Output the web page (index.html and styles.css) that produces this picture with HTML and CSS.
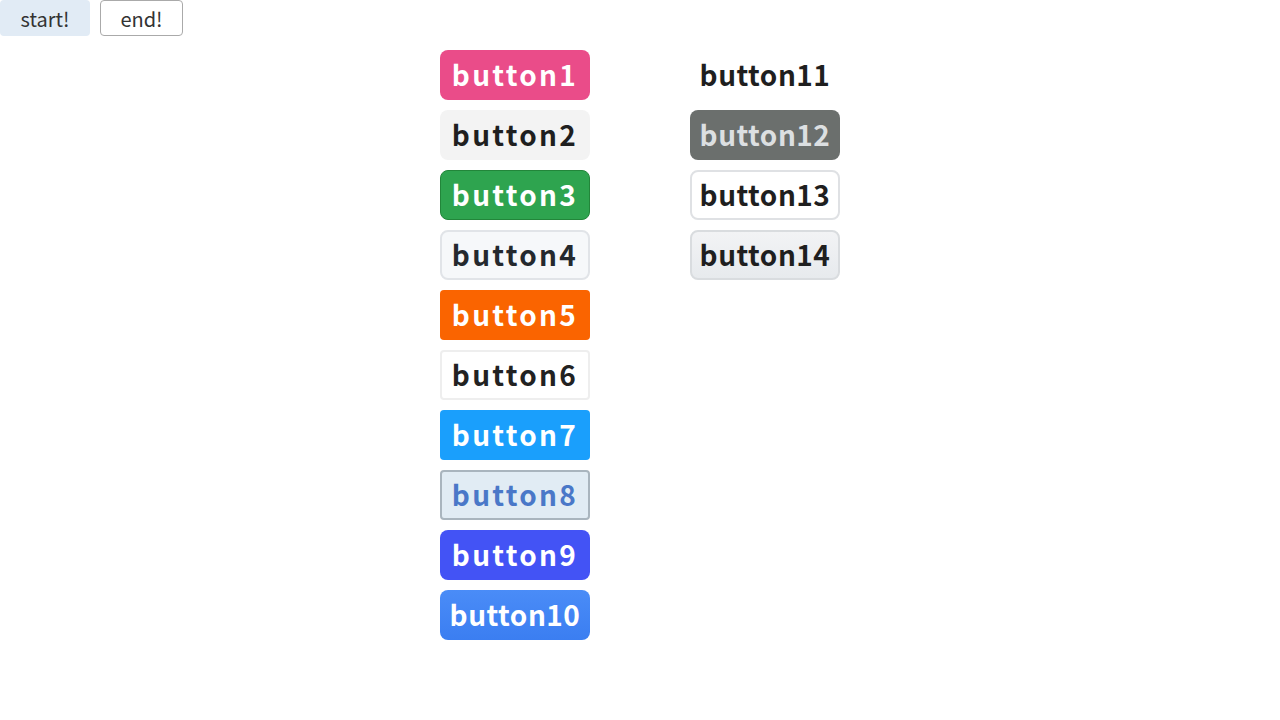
FILE: index.html
```html
<!DOCTYPE html>
<html lang="ja">
<head>
<meta charset="utf-8">
<title>buttons</title>
<link rel="stylesheet" href="styles.css">
</head>
<body>
<div class="toolbar">
  <button class="ctrl ctrl-start">start!</button>
  <button class="ctrl ctrl-end">end!</button>
</div>
<div class="grid">
  <div class="col">
    <button class="btn b1">button1</button>
    <button class="btn b2">button2</button>
    <button class="btn b3">button3</button>
    <button class="btn b4">button4</button>
    <button class="btn b5">button5</button>
    <button class="btn b6">button6</button>
    <button class="btn b7">button7</button>
    <button class="btn b8">button8</button>
    <button class="btn b9">button9</button>
    <button class="btn b10 long">button10</button>
  </div>
  <div class="col">
    <button class="btn b11 long">button11</button>
    <button class="btn b12 long">button12</button>
    <button class="btn b13 long">button13</button>
    <button class="btn b14 long">button14</button>
  </div>
</div>
</body>
</html>
```
FILE: styles.css
```css
* { box-sizing: border-box; }
html, body { margin: 0; padding: 0; background: #fff; }
body { font-family: "Noto Sans CJK JP", "Noto Sans", sans-serif; }

.toolbar { display: flex; gap: 10px; height: 36px; }
.ctrl {
  font-family: "Noto Sans CJK JP", "Noto Sans", sans-serif;
  font-size: 20px;
  height: 36px;
  border-radius: 4px;
  color: #333;
  padding: 0;
  margin: 0;
}
.ctrl-start { width: 90px; background: #e1ebf5; border: none; }
.ctrl-end { width: 83px; background: #fff; border: 1px solid #aaa; }

.grid {
  display: flex;
  justify-content: center;
  gap: 100px;
  margin-top: 14px;
}
.col { display: flex; flex-direction: column; gap: 10px; width: 150px; }

.btn {
  width: 150px;
  height: 50px;
  margin: 0;
  padding: 0 0 2px;
  border: none;
  border-radius: 8px;
  font-family: "Noto Sans CJK JP", "Noto Sans", sans-serif;
  font-weight: 700;
  font-size: 28px;
  line-height: 1;
  letter-spacing: 2.3px;
  color: #fff;
  background: transparent;
  text-align: center;
  white-space: nowrap;
}
.btn.long { letter-spacing: 0.5px; }
.b1 { background: #ea4c89; }
.b2 { background: #f3f3f3; color: #1f1f1f; }
.b3 { background: #2ea44f; border: 1px solid #22863a; border-radius: 8px; }
.b4 { background: #f6f8fa; color: #24292e; border: 2px solid #e1e4e8; }
.b5 { background: #fa6400; border-radius: 4px; }
.b6 { background: #fff; color: #222; border: 2px solid #eeeeee; border-radius: 4px; }
.b7 { background: #1a9ffc; border-radius: 4px; }
.b8 { background: #e1ecf4; color: #4a78c8; border: 2px solid #a9b5be; border-radius: 4px; }
.b9 { background: #4353f5; }
.b10 { background: linear-gradient(#4a8cf7, #3b7ef1); }
.b11 { background: transparent; color: #1f1f1f; }
.b12 { background: #6b6f6d; color: #dcdfe1; }
.b13 { background: #fff; color: #1f1f1f; border: 2px solid #dfe1e4; }
.b14 { background: linear-gradient(#f2f3f5, #e7eaed); color: #1f1f1f; border: 2px solid #d9dcdf; }
```
